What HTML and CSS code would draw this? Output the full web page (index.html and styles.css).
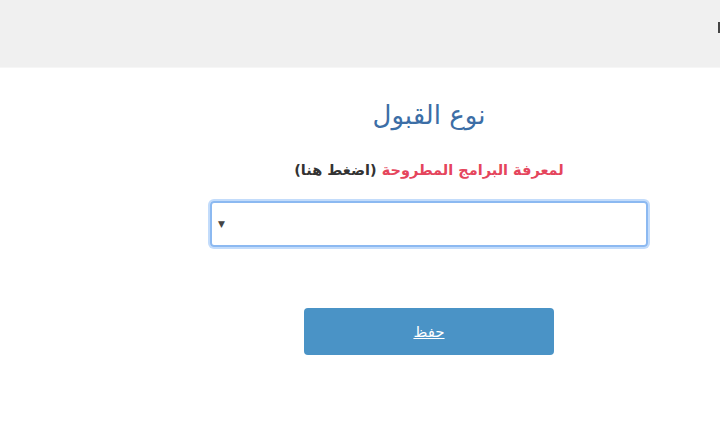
FILE: index.html
```html
<!DOCTYPE html>
<html lang="ar" dir="rtl">
<head>
    <meta charset="UTF-8">
    <meta name="viewport" content="width=device-width, initial-scale=1.0">
    <title>نوع القبول</title>
    <link rel="stylesheet" href="styles.css">
</head>
<body>
    <header class="top-bar">
        <span class="edge-mark"></span>
    </header>

    <main class="page">
        <div class="form-column">
            <h1 class="form-title">نوع القبول</h1>
            <p class="programs-link">
                <span class="red">لمعرفة البرامج المطروحة</span>
                <span class="dark">(اضغط هنا)</span>
            </p>

            <div class="select-box">
                <span class="arrow">▼</span>
            </div>

            <button class="save-btn">حفظ</button>
        </div>
    </main>
</body>
</html>
```

FILE: styles.css
```css
body {
    margin: 0;
    font-family: "DejaVu Sans", sans-serif;
    background-color: #fff;
}
.top-bar {
    height: 67px;
    background-color: #f0f0f0;
    border-bottom: 1px solid #f6f6f6;
    position: relative;
}
.edge-mark {
    position: absolute;
    right: 0;
    top: 22px;
    width: 2px;
    height: 11px;
    background-color: #444;
}
.page {
    display: flex;
    justify-content: flex-start;
    padding-right: 71px;
}
.form-column {
    width: 440px;
    display: flex;
    flex-direction: column;
    align-items: center;
}
.form-title {
    margin: 28px 0 0;
    font-size: 26px;
    font-weight: normal;
    color: #3c6ea6;
    line-height: 38px;
}
.programs-link {
    margin: 24px 0 0;
    font-size: 14.5px;
    font-weight: bold;
    line-height: 24px;
}
.red {
    color: #e5455c;
}
.dark {
    color: #333;
}
.select-box {
    margin-top: 19px;
    height: 42px;
    border: 2px solid #8cb9f1;
    border-radius: 4px;
    box-shadow: 0 0 0 2px #c3dcfb;
    display: flex;
    align-items: center;
    justify-content: flex-end;
    padding: 0 6px;
    box-sizing: content-box;
    width: 422px;
}
.arrow {
    font-size: 9px;
    color: #444;
}
.save-btn {
    margin-top: 61px;
    width: 250px;
    height: 47px;
    background-color: #4a93c6;
    color: #fff;
    border: none;
    border-radius: 4px;
    font-family: "DejaVu Sans", sans-serif;
    font-size: 15px;
    text-decoration: underline;
    cursor: pointer;
}
```
